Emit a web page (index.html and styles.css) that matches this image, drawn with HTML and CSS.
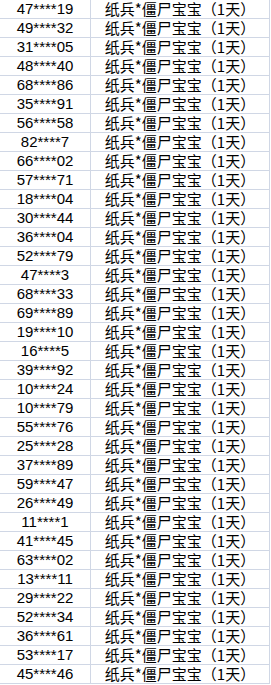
FILE: index.html
```html
<!DOCTYPE html>
<html lang="zh-CN">
<head>
<meta charset="utf-8">
<title>名单</title>
<link rel="stylesheet" href="styles.css">
</head>
<body>
<div class="sheet">
<div class="cell id">47****19</div><div class="cell prize">纸兵*僵尸宝宝（1天）</div>
<div class="cell id">49****32</div><div class="cell prize">纸兵*僵尸宝宝（1天）</div>
<div class="cell id">31****05</div><div class="cell prize">纸兵*僵尸宝宝（1天）</div>
<div class="cell id">48****40</div><div class="cell prize">纸兵*僵尸宝宝（1天）</div>
<div class="cell id">68****86</div><div class="cell prize">纸兵*僵尸宝宝（1天）</div>
<div class="cell id">35****91</div><div class="cell prize">纸兵*僵尸宝宝（1天）</div>
<div class="cell id">56****58</div><div class="cell prize">纸兵*僵尸宝宝（1天）</div>
<div class="cell id">82****7</div><div class="cell prize">纸兵*僵尸宝宝（1天）</div>
<div class="cell id">66****02</div><div class="cell prize">纸兵*僵尸宝宝（1天）</div>
<div class="cell id">57****71</div><div class="cell prize">纸兵*僵尸宝宝（1天）</div>
<div class="cell id">18****04</div><div class="cell prize">纸兵*僵尸宝宝（1天）</div>
<div class="cell id">30****44</div><div class="cell prize">纸兵*僵尸宝宝（1天）</div>
<div class="cell id">36****04</div><div class="cell prize">纸兵*僵尸宝宝（1天）</div>
<div class="cell id">52****79</div><div class="cell prize">纸兵*僵尸宝宝（1天）</div>
<div class="cell id">47****3</div><div class="cell prize">纸兵*僵尸宝宝（1天）</div>
<div class="cell id">68****33</div><div class="cell prize">纸兵*僵尸宝宝（1天）</div>
<div class="cell id">69****89</div><div class="cell prize">纸兵*僵尸宝宝（1天）</div>
<div class="cell id">19****10</div><div class="cell prize">纸兵*僵尸宝宝（1天）</div>
<div class="cell id">16****5</div><div class="cell prize">纸兵*僵尸宝宝（1天）</div>
<div class="cell id">39****92</div><div class="cell prize">纸兵*僵尸宝宝（1天）</div>
<div class="cell id">10****24</div><div class="cell prize">纸兵*僵尸宝宝（1天）</div>
<div class="cell id">10****79</div><div class="cell prize">纸兵*僵尸宝宝（1天）</div>
<div class="cell id">55****76</div><div class="cell prize">纸兵*僵尸宝宝（1天）</div>
<div class="cell id">25****28</div><div class="cell prize">纸兵*僵尸宝宝（1天）</div>
<div class="cell id">37****89</div><div class="cell prize">纸兵*僵尸宝宝（1天）</div>
<div class="cell id">59****47</div><div class="cell prize">纸兵*僵尸宝宝（1天）</div>
<div class="cell id">26****49</div><div class="cell prize">纸兵*僵尸宝宝（1天）</div>
<div class="cell id">11****1</div><div class="cell prize">纸兵*僵尸宝宝（1天）</div>
<div class="cell id">41****45</div><div class="cell prize">纸兵*僵尸宝宝（1天）</div>
<div class="cell id">63****02</div><div class="cell prize">纸兵*僵尸宝宝（1天）</div>
<div class="cell id">13****11</div><div class="cell prize">纸兵*僵尸宝宝（1天）</div>
<div class="cell id">29****22</div><div class="cell prize">纸兵*僵尸宝宝（1天）</div>
<div class="cell id">52****34</div><div class="cell prize">纸兵*僵尸宝宝（1天）</div>
<div class="cell id">36****61</div><div class="cell prize">纸兵*僵尸宝宝（1天）</div>
<div class="cell id">53****17</div><div class="cell prize">纸兵*僵尸宝宝（1天）</div>
<div class="cell id">45****46</div><div class="cell prize">纸兵*僵尸宝宝（1天）</div>
</div>
</body>
</html>
```

FILE: styles.css
```css
html, body {
  margin: 0;
  padding: 0;
  background: #ffffff;
}

.sheet {
  display: grid;
  grid-template-columns: 91px 179px;
  width: 270px;
}

.cell {
  height: 18px;
  line-height: 18px;
  border-right: 1px solid #d0d7e5;
  border-bottom: 1px solid #d0d7e5;
  text-align: center;
  white-space: nowrap;
  color: #000000;
}

.id {
  font-family: "Liberation Sans Narrow", "Liberation Sans", sans-serif;
  font-size: 15px;
}

.prize {
  font-family: "Noto Sans CJK SC", sans-serif;
  font-size: 15px;
}
```
